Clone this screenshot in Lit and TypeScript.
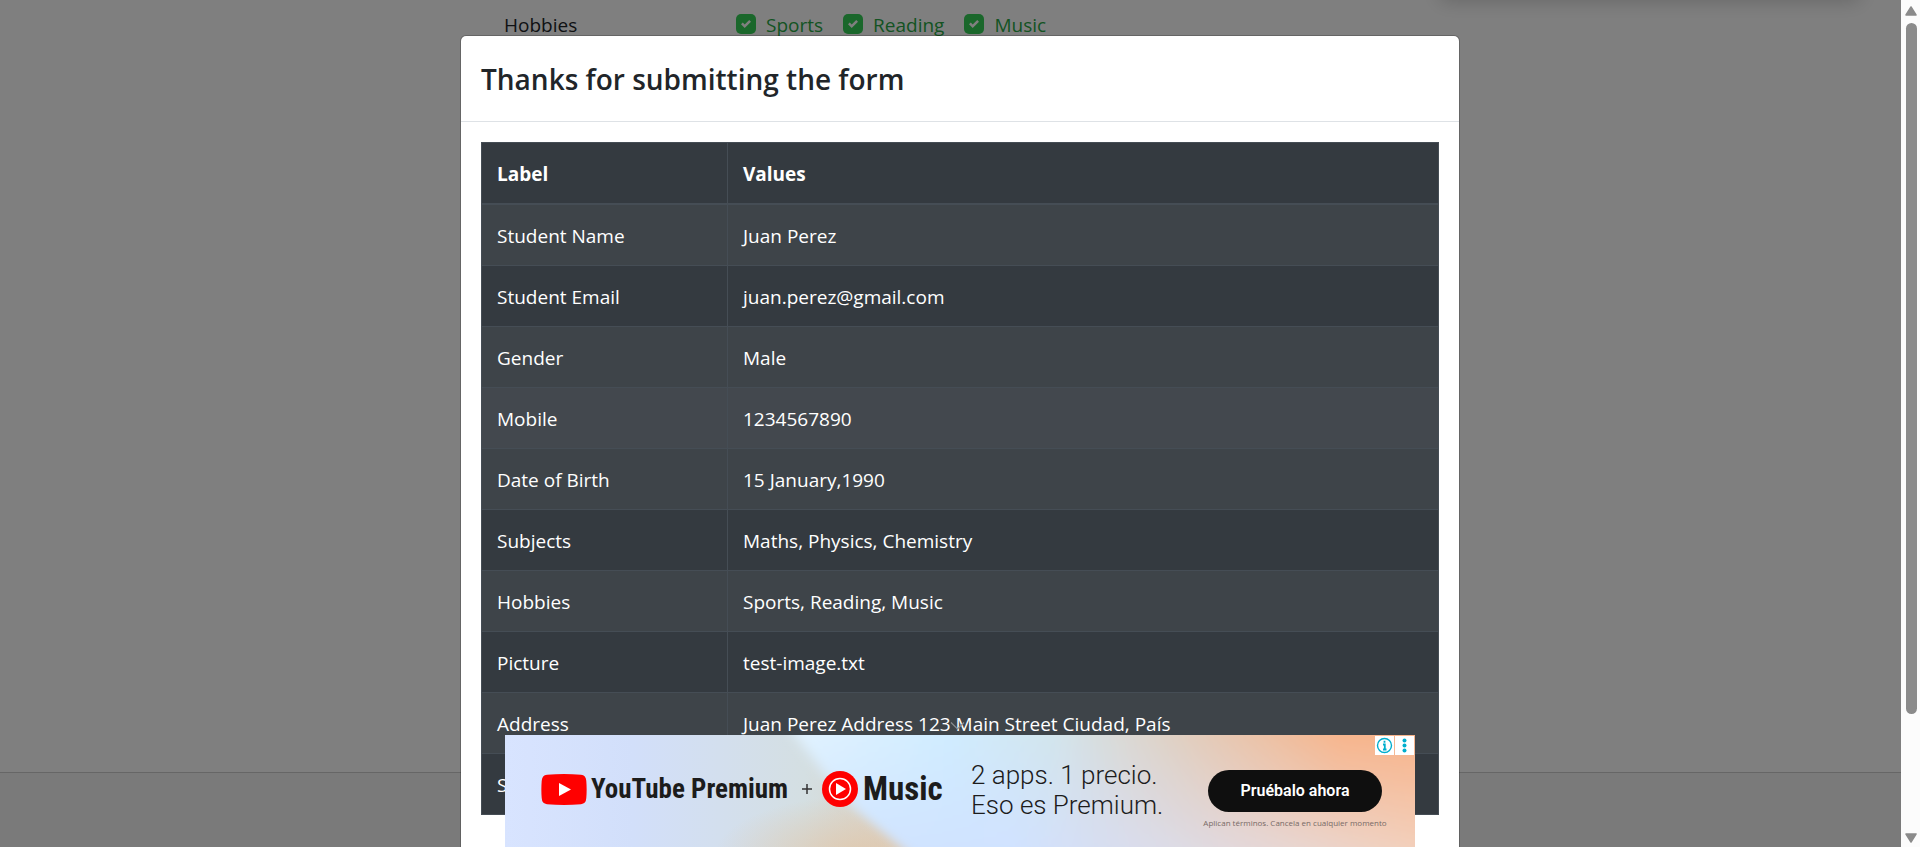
import { LitElement, html, css } from "lit";
import { customElement } from "lit/decorators.js";

@customElement("form-page")
class FormPage extends LitElement {
  static styles = css`
    :host { display: flex; flex-direction: column; height: 100%; background: #fff; color: #212529; font-size: 19px; line-height: 30px; }
    main { flex: 1; }
    .row { display: grid; grid-template-columns: 232px 1fr; width: 912px; max-width: 100%; margin: 0 auto; padding-top: 10px; }
    .checks { display: flex; gap: 20px; color: #28a745; }
    label { display: flex; align-items: center; gap: 10px; }
    input { appearance: none; width: 20px; height: 20px; margin: 0 0 2px; border-radius: 5px; background: #34ce57 center / 10px 10px no-repeat
      url("data:image/svg+xml,%3Csvg xmlns='http://www.w3.org/2000/svg' viewBox='0 0 8 8'%3E%3Cpath fill='%23fff' d='M6.564.75l-3.59 3.612-1.538-1.55L0 4.26l2.974 2.99L8 2.193z'/%3E%3C/svg%3E"); }
    footer { height: 74px; background: #f5f5f5; border-top: 1px solid #ccc; }
    .side-panel { position: absolute; right: 60px; top: -60px; width: 420px; height: 56px; box-shadow: 0 5px 20px rgba(0, 0, 0, 0.2); }
  `;
  render() {
    return html`
      <main>
        <div class="row">
          <span>Hobbies</span>
          <div class="checks">
            ${["Sports", "Reading", "Music"].map((h) => html`<label><input type="checkbox" checked />${h}</label>`)}
          </div>
        </div>
      </main>
      <footer></footer>
      <div class="side-panel"></div>`;
  }
}

const ROWS: [string, string][] = [
  ["Student Name", "Juan Perez"],
  ["Student Email", "juan.perez@gmail.com"],
  ["Gender", "Male"],
  ["Mobile", "1234567890"],
  ["Date of Birth", "15 January,1990"],
  ["Subjects", "Maths, Physics, Chemistry"],
  ["Hobbies", "Sports, Reading, Music"],
  ["Picture", "test-image.txt"],
  ["Address", "Juan Perez Address 123 Main Street Ciudad, País"],
  ["State and City", ""],
];

@customElement("result-modal")
class ResultModal extends LitElement {
  static styles = css`
    :host { display: block; box-sizing: border-box; width: 1000px; max-width: 100%; margin: 35px auto; background: #fff; background-clip: padding-box; border: 1px solid rgba(0, 0, 0, 0.2); border-radius: 6px; color: #212529; }
    header { padding: 21px 20px 19px; border-bottom: 1px solid #dee2e6; }
    h4 { margin: 0; font-size: 28px; line-height: 45px; font-weight: 600; }
    .body { padding: 20px 20px 60px; }
    table { width: 100%; border-collapse: collapse; border: 1px solid #454d55; background: #343a40; color: #fff; font-size: 19px; line-height: 30px; table-layout: fixed; }
    th, td { padding: 16px 15px 14px; border: 1px solid #454d55; text-align: left; white-space: nowrap; }
    th { font-weight: 700; border-bottom-width: 2px; }
    .label { width: 215px; }
    tbody tr:nth-child(odd) { background: rgba(255, 255, 255, 0.05); }
    tbody tr.active { background: rgba(255, 255, 255, 0.075); }
  `;
  render() {
    return html`
      <header><h4>Thanks for submitting the form</h4></header>
      <div class="body">
        <table>
          <thead><tr><th class="label">Label</th><th>Values</th></tr></thead>
          <tbody>
            ${ROWS.map(([k, v]) => html`<tr class=${k === "Mobile" ? "active" : ""}><td>${k}</td><td>${v}</td></tr>`)}
          </tbody>
        </table>
      </div>`;
  }
}

@customElement("ad-banner")
class AdBanner extends LitElement {
  static styles = css`
    :host { display: block; position: relative; width: 910px; max-width: 100%; height: 112px; color: #1c1c1c; }
    .bg { position: absolute; inset: 0; width: 100%; height: 100%; }
    .content { position: relative; display: flex; align-items: center; height: 108px; padding-left: 36px; white-space: nowrap; }
    .logo { flex: none; }
    .brand { font: 700 27px/36px "Roboto Condensed", Roboto, sans-serif; }
    .premium { margin-left: 4px; width: 200px; }
    .plus { width: 10px; margin: 0 10px 0 11px; }
    .music { margin-left: 5px; width: 80px; font-size: 33px; }
    .copy { margin-left: 28px; width: 200px; padding-top: 2px; font: 300 26px/30px Roboto, sans-serif; }
    .cta { margin: 22px 30px 0 auto; width: 180px; display: flex; flex-direction: column; align-items: center; gap: 4px; }
    button { width: 174px; height: 42px; border: 0; border-radius: 21px; background: #0f0f0f; color: #fff; font: 600 16px/20px Roboto, sans-serif; }
    small { font: 400 8px/14px "Open Sans", sans-serif; color: #776a66; }
    .choices { position: absolute; top: 1px; right: 1px; display: flex; gap: 1px; }
    .choices a { width: 19px; height: 19px; background: #fff; }
    .choices svg { display: block; }
    .collapse { position: absolute; left: 445px; top: -14px; }
  `;
  render() {
    return html`
      <svg class="bg" viewBox="0 0 910 112" preserveAspectRatio="none">
        <defs>
          <linearGradient id="base" x1="0" x2="1" y1="0" y2="0">
            <stop offset="0" stop-color="#d8e4ff" /><stop offset=".14" stop-color="#d2dffa" /><stop offset=".33" stop-color="#d4dfe2" /><stop offset=".45" stop-color="#dcd0c0" />
          </linearGradient>
          <linearGradient id="right" gradientUnits="userSpaceOnUse" x1="290" x2="910" y1="0" y2="0">
            <stop offset="0" stop-color="#e2f3ff" /><stop offset=".25" stop-color="#d0ecff" /><stop offset=".42" stop-color="#d3e5ed" /><stop offset=".65" stop-color="#e3cdbc" /><stop offset=".88" stop-color="#f7b68e" /><stop offset="1" stop-color="#f7b48c" />
          </linearGradient>
          <linearGradient id="low" gradientUnits="userSpaceOnUse" x1="290" x2="910" y1="0" y2="0">
            <stop offset="0" stop-color="#cfe4ff" /><stop offset=".35" stop-color="#d0e2ff" /><stop offset=".6" stop-color="#dcdbe6" /><stop offset="1" stop-color="#f3cfba" />
          </linearGradient>
          <linearGradient id="fade" gradientUnits="userSpaceOnUse" x1="0" x2="0" y1="0" y2="112"><stop offset="0" stop-color="#000" /><stop offset="1" stop-color="#fff" /></linearGradient>
          <radialGradient id="peach"><stop offset="0" stop-color="#dfc9b0" /><stop offset="1" stop-color="#dfc9b0" stop-opacity="0" /></radialGradient>
          <mask id="m" maskUnits="userSpaceOnUse" x="0" y="-40" width="980" height="190"><rect y="-40" width="980" height="190" fill="url(#fade)" /></mask>
          <filter id="soft" x="-10%" width="120%" y="-20%" height="140%"><feGaussianBlur stdDeviation="7 3" /></filter>
          <clipPath id="box"><rect width="910" height="112" /></clipPath>
        </defs>
        <g clip-path="url(#box)">
          <rect width="910" height="112" fill="url(#base)" />
          <ellipse cx="360" cy="120" rx="150" ry="60" fill="url(#peach)" />
          <g filter="url(#soft)">
            <path d="M282 -30 290 0 320 40 350 74 396 112 430 140H960V-30Z" fill="url(#right)" />
            <path d="M282 -30 290 0 320 40 350 74 396 112 430 140H960V-30Z" fill="url(#low)" mask="url(#m)" />
          </g>
        </g>
      </svg>
      <div class="content">
        <svg class="logo" width="46" height="31" viewBox="0 0 46 31"><path fill="#f00" d="M6 .8Q23-.8 40 .8 45 1.300 45.300 7 46 15.500 45.300 24 45 29.700 40 30.200 23 31.800 6 30.200 1 29.700 .7 24 0 15.500 .7 7 1 1.300 6 .8Z" /><path fill="#fff" d="M18 9 30 15.500 18 22Z" /></svg>
        <span class="brand premium">YouTube Premium</span>
        <svg class="logo plus" width="10" height="10" viewBox="0 0 10 10"><path d="M5 0V10M0 5H10" stroke="#333" stroke-width="1.500" /></svg>
        <svg class="logo" width="36" height="36" viewBox="0 0 36 36"><circle cx="18" cy="18" r="18" fill="#f00" /><circle cx="18" cy="18" r="10.500" fill="none" stroke="#fff" stroke-width="1.500" /><path fill="#fff" d="M14 12 24 18 14 24Z" /></svg>
        <span class="brand music">Music</span>
        <div class="copy">2 apps. 1 precio.<br />Eso es Premium.</div>
        <div class="cta"><button>Pruébalo ahora</button><small>Aplican términos. Cancela en cualquier momento</small></div>
      </div>
      <div class="choices">
        <a href="#" aria-label="AdChoices"><svg width="19" height="19" viewBox="0 0 19 19"><circle cx="9.500" cy="9.500" r="7" fill="none" stroke="#00aecd" stroke-width="1.400" /><path d="M9.500 4.800v2M8 8.500h1.800v5M8 13.500h3.500" fill="none" stroke="#00aecd" stroke-width="1.800" /></svg></a>
        <a href="#" aria-label="Options"><svg width="19" height="19" viewBox="0 0 19 19" fill="#00aecd"><circle cx="9.500" cy="4.500" r="2" /><circle cx="9.500" cy="9.500" r="2" /><circle cx="9.500" cy="14.500" r="2" /></svg></a>
      </div>
      <svg class="collapse" width="15" height="10" viewBox="0 0 15 10"><path d="M1 1.500 7.500 8 14 1.500" fill="none" stroke="#8a8d90" stroke-width="1.200" /></svg>`;
  }
}

@customElement("app-root")
class AppRoot extends LitElement {
  static styles = css`
    :host { display: block; position: relative; height: 100vh; overflow: hidden; font-family: "Open Sans", "Noto Sans", sans-serif; }
    .backdrop { position: absolute; inset: 0; background: rgba(0, 0, 0, 0.5); }
    .modal-layer { position: absolute; inset: 0; overflow: hidden; }
    .ad-layer { position: absolute; left: 0; right: 0; bottom: 0; display: flex; justify-content: center; }
    .scrollbar { position: absolute; top: 0; right: 0; bottom: 0; box-sizing: border-box; width: 19px; padding: 6px 3px 4px 4px; display: flex; flex-direction: column; align-items: center; background: #fcfcfc; }
    .track { flex: 1; width: 11px; padding: 7px 0 6px; }
    .thumb { height: 86%; border-radius: 6px; background: #8b8b8b; }
    .scrollbar svg { flex: none; }
  `;
  render() {
    return html`
      <form-page></form-page>
      <div class="backdrop"></div>
      <div class="modal-layer"><result-modal></result-modal></div>
      <div class="ad-layer"><ad-banner></ad-banner></div>
      <div class="scrollbar">
        <svg width="12" height="10" viewBox="0 0 12 10"><path d="M6 1 11 9H1Z" fill="#8b8b8b" stroke="#8b8b8b" stroke-width="1.500" stroke-linejoin="round" /></svg>
        <div class="track"><div class="thumb"></div></div>
        <svg width="12" height="10" viewBox="0 0 12 10"><path d="M6 9 11 1H1Z" fill="#8b8b8b" stroke="#8b8b8b" stroke-width="1.500" stroke-linejoin="round" /></svg>
      </div>`;
  }
}
